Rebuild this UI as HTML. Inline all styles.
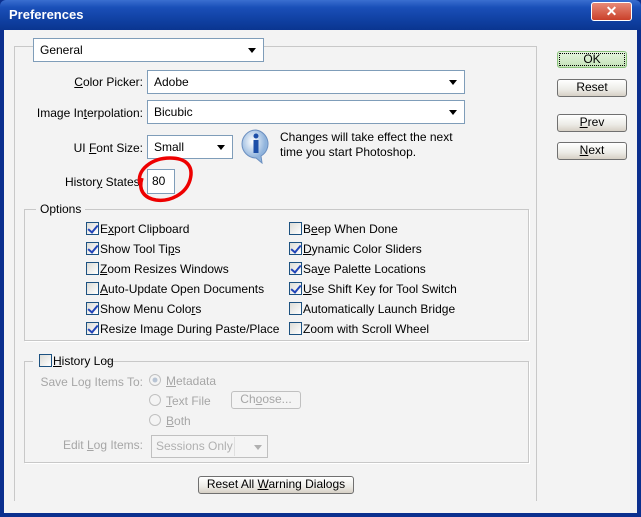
<!DOCTYPE html>
<html><head><style>
*{margin:0;padding:0;box-sizing:border-box}
body{width:641px;height:517px;overflow:hidden;background:#0b2f8e;font-family:Tahoma,"Liberation Sans",sans-serif;font-size:12px;color:#000;position:relative}
.a{position:absolute}
#title{left:0;top:0;width:641px;height:30px;background:linear-gradient(#3a6fd0,#1a4fb8 25%,#0f3fa0 70%,#0a3590);color:#fff;font-weight:bold;font-size:13px;line-height:30px;padding-left:9px;border-radius:6px 6px 0 0}
#client{left:4px;top:30px;width:633px;height:483px;background:#f3f3f3}
.lbl{white-space:nowrap;line-height:14px}
.r{text-align:right}
.sel{background:#fff;border:1px solid #7f9db9;height:24px;line-height:22px;padding-left:6px}
.arr{position:absolute;right:7px;top:9px;width:0;height:0;border-left:4px solid transparent;border-right:4px solid transparent;border-top:5px solid #000}
.grp{border:1px solid #c8c8c8;box-shadow:1px 1px 0 #fff}
.leg{background:#f3f3f3;padding:0 4px;line-height:14px}
.cb{width:13px;height:13px;border:1px solid #1c5180;background:linear-gradient(135deg,#dcdcd7,#fff)}
.cb.c::after{content:"";position:absolute;left:3px;top:0px;width:4px;height:8px;border:solid #2245b8;border-width:0 2px 2px 0;transform:rotate(40deg)}
.btn{border:1px solid #707070;border-radius:3px;background:linear-gradient(#fff,#ecebe6 60%,#d6d0c5);text-align:center;line-height:15px;font-size:12px}
.dis{color:#a6a6a6}
.rad{width:12px;height:12px;border:1px solid #c0c0c0;border-radius:50%;background:#f4f4f4}
u{text-decoration:underline}
</style></head><body>
<div id="title" class="a">Preferences</div>
<div class="a" style="left:591px;top:2px;width:41px;height:19px;border:1px solid #fff;border-radius:3px;background:linear-gradient(#e88a78,#c9402a);color:#fff;font-weight:bold;text-align:center;line-height:16px;font-size:14px">✕</div>
<div id="client" class="a"></div>

<div class="a" style="left:14px;top:46px;width:523px;height:455px;border:1px solid #c8c8c8;border-bottom:none"></div>
<div class="a sel" style="left:33px;top:38px;width:231px;background:#fff">General<div class="arr"></div></div>

<div class="a lbl r" style="left:20px;top:75px;width:123px"><u>C</u>olor Picker:</div>
<div class="a sel" style="left:147px;top:70px;width:318px">Adobe<div class="arr"></div></div>
<div class="a lbl r" style="left:20px;top:106px;width:123px">Image In<u>t</u>erpolation:</div>
<div class="a sel" style="left:147px;top:100px;width:318px">Bicubic<div class="arr"></div></div>
<div class="a lbl r" style="left:20px;top:141px;width:123px">UI <u>F</u>ont Size:</div>
<div class="a sel" style="left:147px;top:135px;width:86px">Small<div class="arr"></div></div>
<svg class="a" style="left:240px;top:128px" width="34" height="36"><defs><radialGradient id="g" cx="40%" cy="35%"><stop offset="0" stop-color="#fff"/><stop offset="1" stop-color="#8fb3dc"/></radialGradient></defs><path d="M16 2a14 14 0 1 0 0 28l6 5-1-7a14 14 0 0 0-5-26z" fill="url(#g)" stroke="#6b8fc0"/><circle cx="16" cy="8" r="2.5" fill="#1d4fa8"/><rect x="13.5" y="12" width="5" height="13" fill="#1d4fa8"/></svg>
<div class="a lbl" style="left:280px;top:130px;line-height:15px">Changes will take effect the next<br>time you start Photoshop.</div>
<div class="a lbl r" style="left:20px;top:175px;width:123px">Histor<u>y</u> States:</div>
<div class="a" style="left:147px;top:169px;width:28px;height:25px;background:#fff;border:1px solid #7f9db9;line-height:23px;padding-left:4px">80</div>
<svg class="a" style="left:130px;top:150px" width="70" height="56"><path d="M10 34C6 20 22 8 40 8c16 0 24 8 20 22-4 14-20 22-34 20C14 48 8 40 12 28" fill="none" stroke="#e00" stroke-width="3.5"/></svg>

<div class="a grp" style="left:24px;top:209px;width:505px;height:132px"></div>
<div class="a leg" style="left:36px;top:202px">Options</div>
<div class="a cb c" style="left:86px;top:222px"></div><div class="a lbl" style="left:100px;top:222px">E<u>x</u>port Clipboard</div>
<div class="a cb c" style="left:86px;top:242px"></div><div class="a lbl" style="left:100px;top:242px">Show Tool Ti<u>p</u>s</div>
<div class="a cb" style="left:86px;top:262px"></div><div class="a lbl" style="left:100px;top:262px"><u>Z</u>oom Resizes Windows</div>
<div class="a cb" style="left:86px;top:282px"></div><div class="a lbl" style="left:100px;top:282px"><u>A</u>uto-Update Open Documents</div>
<div class="a cb c" style="left:86px;top:302px"></div><div class="a lbl" style="left:100px;top:302px">Show Menu Colo<u>r</u>s</div>
<div class="a cb c" style="left:86px;top:322px"></div><div class="a lbl" style="left:100px;top:322px">Resize Image During Paste/Place</div>
<div class="a cb" style="left:289px;top:222px"></div><div class="a lbl" style="left:303px;top:222px">B<u>e</u>ep When Done</div>
<div class="a cb c" style="left:289px;top:242px"></div><div class="a lbl" style="left:303px;top:242px"><u>D</u>ynamic Color Sliders</div>
<div class="a cb c" style="left:289px;top:262px"></div><div class="a lbl" style="left:303px;top:262px">Sa<u>v</u>e Palette Locations</div>
<div class="a cb c" style="left:289px;top:282px"></div><div class="a lbl" style="left:303px;top:282px"><u>U</u>se Shift Key for Tool Switch</div>
<div class="a cb" style="left:289px;top:302px"></div><div class="a lbl" style="left:303px;top:302px">Automatically Launch Brid<u>g</u>e</div>
<div class="a cb" style="left:289px;top:322px"></div><div class="a lbl" style="left:303px;top:322px">Zoom with Scroll Wheel</div>

<div class="a grp" style="left:24px;top:361px;width:505px;height:102px"></div>
<div class="a leg" style="left:33px;top:353px;width:70px;height:16px"></div>
<div class="a cb" style="left:39px;top:354px"></div><div class="a lbl" style="left:53px;top:354px"><u>H</u>istory Log</div>
<div class="a lbl r dis" style="left:20px;top:375px;width:123px">Save Log Items To:</div>
<div class="a rad" style="left:149px;top:374px;background:radial-gradient(#b8c4d4 30%,#f4f4f4 40%)"></div><div class="a lbl dis" style="left:166px;top:374px"><u>M</u>etadata</div>
<div class="a rad" style="left:149px;top:394px"></div><div class="a lbl dis" style="left:166px;top:394px"><u>T</u>ext File</div>
<div class="a rad" style="left:149px;top:414px"></div><div class="a lbl dis" style="left:166px;top:414px"><u>B</u>oth</div>
<div class="a btn dis" style="left:231px;top:391px;width:70px;height:18px;border-color:#c0c0c0;background:#f4f4f4">Ch<u>o</u>ose...</div>
<div class="a lbl r dis" style="left:20px;top:438px;width:123px">Edit <u>L</u>og Items:</div>
<div class="a" style="left:151px;top:435px;width:117px;height:23px;border:1px solid #c0c0c0;background:#f4f4f4;padding-left:4px;line-height:21px;color:#b0b0b0">Sessions Only<div class="a" style="left:82px;top:1px;width:1px;height:19px;background:#e0e0e0"></div><div class="arr" style="border-top-color:#b0b0b0;top:9px;right:5px"></div></div>

<div class="a btn" style="left:198px;top:476px;width:156px;height:18px">Reset All <u>W</u>arning Dialogs</div>

<div class="a btn" style="left:557px;top:51px;width:70px;height:17px;border-color:#8cc37e;background:linear-gradient(#e6f5e0,#c4e3b7);outline:1px dotted #000;outline-offset:-3px">OK</div>
<div class="a btn" style="left:557px;top:79px;width:70px;height:18px">Reset</div>
<div class="a btn" style="left:557px;top:114px;width:70px;height:18px"><u>P</u>rev</div>
<div class="a btn" style="left:557px;top:142px;width:70px;height:18px"><u>N</u>ext</div>
</body></html>
